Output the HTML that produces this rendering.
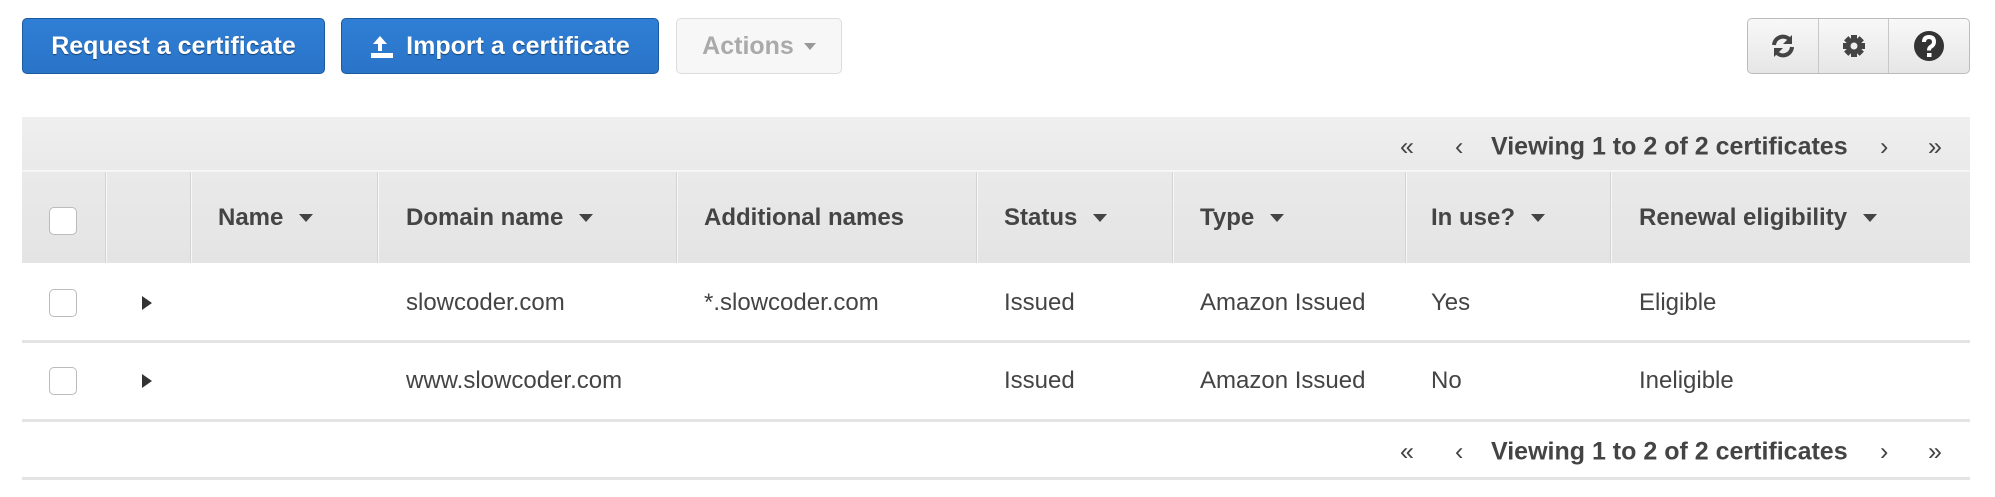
<!DOCTYPE html>
<html><head><style>
*{box-sizing:border-box;margin:0;padding:0}
body{width:1995px;height:497px;background:#fff;font-family:"Liberation Sans",Arial,sans-serif;position:relative;overflow:hidden;color:#444}
.abs{position:absolute}
.btn{position:absolute;top:18px;height:56px;border-radius:5px;font-weight:bold;font-size:25px;display:flex;align-items:center;justify-content:center}
.blue{background:linear-gradient(#2f7fd6,#2a74c8);border:1px solid #1c5a9e;color:#fff;text-shadow:0 1px 1px rgba(0,0,0,.45)}
.hd{position:absolute;top:172px;height:91px;font-weight:bold;font-size:24px;display:flex;align-items:center;color:#444}
.sep{position:absolute;top:172px;height:91px;width:2px;background:#f7f7f7;border-left:1px solid #d4d4d4}
.cell{position:absolute;font-size:24px;color:#444;transform:translateY(-50%)}
.cb{position:absolute;width:28px;height:28px;border:1px solid #bbb;border-radius:5px;background:#fff}
.tri{display:inline-block;width:0;height:0;border-left:7px solid transparent;border-right:7px solid transparent;border-top:8px solid #444;margin-left:16px}
.exp{position:absolute;width:0;height:0;border-top:7px solid transparent;border-bottom:7px solid transparent;border-left:10px solid #333}
.line{position:absolute;left:22px;width:1948px;height:3px;background:#e4e4e4}
.pg{position:absolute;font-size:25px;color:#444;transform:translateY(-50%)}
</style></head><body>
<div class="btn blue" style="left:22px;width:303px">Request a certificate</div>
<div class="btn blue" style="left:341px;width:318px">
<svg width="26" height="24" viewBox="0 0 26 24" style="margin-right:10px"><path d="M10 2 L3 10 H8 V17 H12 V10 H17 Z" fill="#fff"/><rect x="1" y="19" width="22" height="5" fill="#fff"/></svg>Import a certificate</div>
<div class="btn" style="left:676px;width:166px;border:1px solid #ddd;background:#f7f7f7;color:#aaa">Actions <span style="display:inline-block;border-left:6px solid transparent;border-right:6px solid transparent;border-top:7px solid #999;margin-left:10px"></span></div>
<div class="abs" style="left:1747px;top:18px;width:223px;height:56px;border:1px solid #bbb;border-radius:5px;background:linear-gradient(#f8f8f8,#e6e6e6);display:flex">
<div style="width:71px;border-right:1px solid #c8c8c8;display:flex;align-items:center;justify-content:center"><svg width="26" height="26" viewBox="0 0 26 26"><path d="M4 12 A9 9 0 0 1 20 7" fill="none" stroke="#444" stroke-width="4"/><path d="M22 2 V11 H13 Z" fill="#444"/><path d="M22 14 A9 9 0 0 1 6 19" fill="none" stroke="#444" stroke-width="4"/><path d="M4 24 V15 H13 Z" fill="#444"/></svg></div>
<div style="width:70px;border-right:1px solid #c8c8c8;display:flex;align-items:center;justify-content:center"><svg width="24" height="24" viewBox="0 0 24 24"><g fill="#444"><circle cx="12" cy="12" r="8"/><rect x="9" y="1" width="6" height="22"/><rect x="1" y="9" width="22" height="6"/><rect x="9" y="1" width="6" height="22" transform="rotate(45 12 12)"/><rect x="9" y="1" width="6" height="22" transform="rotate(-45 12 12)"/></g><circle cx="12" cy="12" r="3.5" fill="#eee"/></svg></div>
<div style="flex:1;display:flex;align-items:center;justify-content:center"><svg width="32" height="32" viewBox="0 0 32 32"><circle cx="16" cy="16" r="15" fill="#333"/><path d="M11 12 Q11 7 16 7 Q21 7 21 12 Q21 15 17.5 17 Q16 18 16 20.5" fill="none" stroke="#fff" stroke-width="4"/><rect x="14" y="23" width="4.5" height="4" fill="#fff"/></svg></div>
</div>
<div class="abs" style="left:22px;top:117px;width:1948px;height:146px;background:linear-gradient(#efefef,#e9e9e9 40%,#e4e4e4)"></div>
<div class="abs" style="left:22px;top:170px;width:1948px;height:2px;background:#f6f6f6"></div>
<div class="pg" style="left:1400px;top:147px">«</div>
<div class="pg" style="left:1455px;top:147px">‹</div>
<div class="pg" style="left:1491px;top:147px;font-weight:bold">Viewing 1 to 2 of 2 certificates</div>
<div class="pg" style="left:1880px;top:147px">›</div>
<div class="pg" style="left:1928px;top:147px">»</div>
<div class="sep" style="left:105px"></div>
<div class="sep" style="left:190px"></div>
<div class="sep" style="left:377px"></div>
<div class="sep" style="left:676px"></div>
<div class="sep" style="left:976px"></div>
<div class="sep" style="left:1172px"></div>
<div class="sep" style="left:1405px"></div>
<div class="sep" style="left:1610px"></div>
<div class="cb" style="left:49px;top:207px"></div>
<div class="hd" style="left:218px">Name<span class="tri"></span></div>
<div class="hd" style="left:406px">Domain name<span class="tri"></span></div>
<div class="hd" style="left:704px">Additional names</div>
<div class="hd" style="left:1004px">Status<span class="tri"></span></div>
<div class="hd" style="left:1200px">Type<span class="tri"></span></div>
<div class="hd" style="left:1431px">In use?<span class="tri"></span></div>
<div class="hd" style="left:1639px">Renewal eligibility<span class="tri"></span></div>
<div class="cb" style="left:49px;top:289px"></div>
<div class="exp" style="left:142px;top:296px"></div>
<div class="cell" style="left:406px;top:303px">slowcoder.com</div>
<div class="cell" style="left:704px;top:303px">*.slowcoder.com</div>
<div class="cell" style="left:1004px;top:303px">Issued</div>
<div class="cell" style="left:1200px;top:303px">Amazon Issued</div>
<div class="cell" style="left:1431px;top:303px">Yes</div>
<div class="cell" style="left:1639px;top:303px">Eligible</div>
<div class="line" style="top:340px"></div>
<div class="cb" style="left:49px;top:367px"></div>
<div class="exp" style="left:142px;top:374px"></div>
<div class="cell" style="left:406px;top:381px">www.slowcoder.com</div>
<div class="cell" style="left:1004px;top:381px">Issued</div>
<div class="cell" style="left:1200px;top:381px">Amazon Issued</div>
<div class="cell" style="left:1431px;top:381px">No</div>
<div class="cell" style="left:1639px;top:381px">Ineligible</div>
<div class="line" style="top:419px"></div>
<div class="pg" style="left:1400px;top:452px">«</div>
<div class="pg" style="left:1455px;top:452px">‹</div>
<div class="pg" style="left:1491px;top:452px;font-weight:bold">Viewing 1 to 2 of 2 certificates</div>
<div class="pg" style="left:1880px;top:452px">›</div>
<div class="pg" style="left:1928px;top:452px">»</div>
<div class="line" style="top:477px"></div>
</body></html>
